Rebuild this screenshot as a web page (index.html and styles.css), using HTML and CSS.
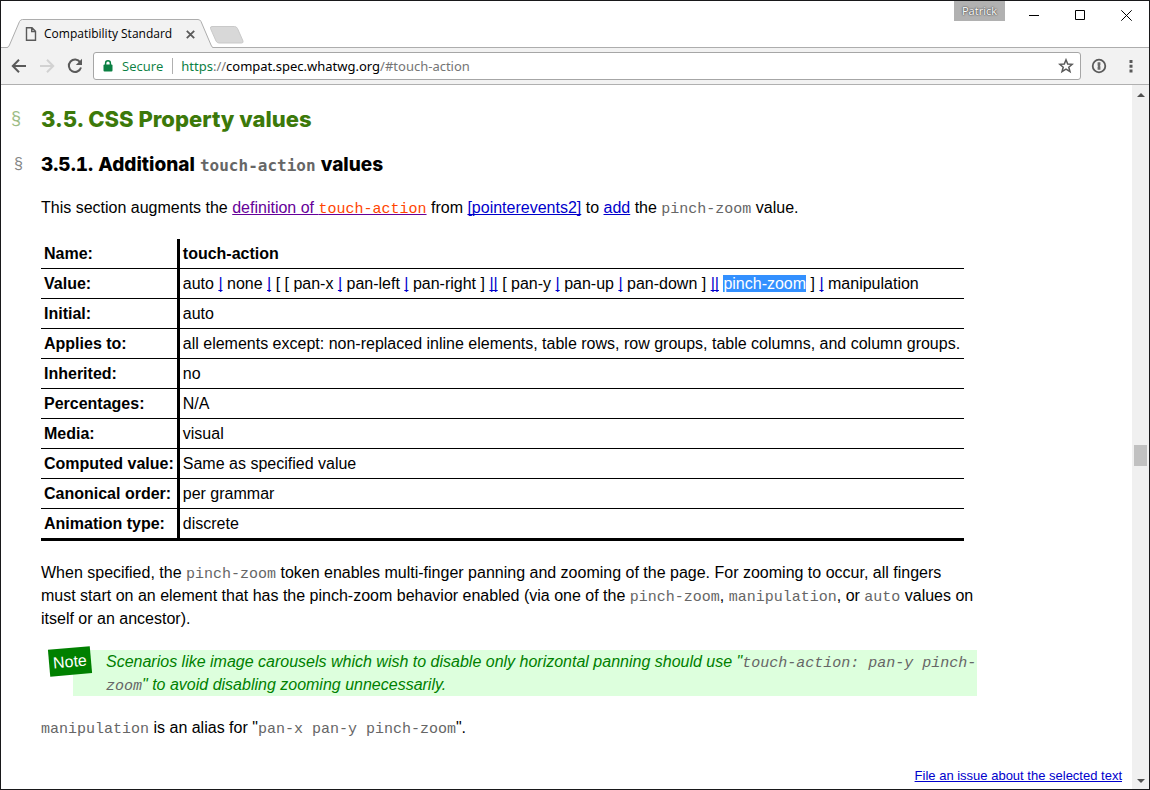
FILE: index.html
```html
<!DOCTYPE html>
<html lang="en">
<head>
<meta charset="utf-8">
<title>Compatibility Standard</title>
<link rel="stylesheet" href="styles.css">
</head>
<body>
<div class="window">
  <header class="tabstrip">
    <div class="tab">
      <svg class="tab-shape" width="208" height="29" viewBox="0 0 208 29" aria-hidden="true">
        <path class="tab-fill" d="M0 29V28.500H1Q2.500 28.500 3.500 26L13.500 2.500Q14.500 .5 16.500 .5H192Q194 .5 195 2.500L205 26Q206 28.500 207 28.500H208V29Z"/>
        <path class="tab-line" d="M0 28.500H1Q2.500 28.500 3.500 26L13.500 2.500Q14.500 .5 16.500 .5H192Q194 .5 195 2.500L205 26Q206 28.500 207 28.500H208"/>
      </svg>
      <svg class="tab-icon" width="12" height="14" viewBox="0 0 12 14" aria-hidden="true"><path d="M1.500 .7H7L10.500 4.200V13.300H1.500ZM6.700 .7V4.500H10.500"/></svg>
      <span class="tab-title">Compatibility Standard</span>
      <button class="plain tab-close" aria-label="Close tab"><svg width="9" height="9" viewBox="0 0 9 9"><path d="M.8 .8L8.200 8.200M8.200 .8L.8 8.200"/></svg></button>
    </div>
    <button class="plain new-tab" aria-label="New tab"><svg width="36" height="18" viewBox="0 0 36 18"><path d="M3 .5H25.500Q27.500 .5 28.500 2.500L34 15Q34.500 17 32.500 17H10Q8 17 7 15L1.500 2.500Q1 .5 3 .5Z"/></svg></button>
    <div class="controls">
      <button class="profile">Patrick</button>
      <button class="plain control" aria-label="Minimize"><svg width="11" height="11" viewBox="0 0 11 11"><path d="M0 5.500H10"/></svg></button>
      <button class="plain control" aria-label="Maximize"><svg width="11" height="11" viewBox="0 0 11 11"><path d="M.5 .5H9.500V9.500H.5Z"/></svg></button>
      <button class="plain control" aria-label="Close"><svg width="11" height="11" viewBox="0 0 11 11"><path d="M.3 .3L10.700 10.700M10.700 .3L.3 10.700"/></svg></button>
    </div>
  </header>

  <nav class="toolbar">
    <button class="plain tool" aria-label="Back"><svg width="16" height="16" viewBox="0 0 16 16"><path d="M15 8H2M8 1.800L1.800 8L8 14.200"/></svg></button>
    <button class="plain tool disabled" aria-label="Forward" disabled><svg width="16" height="16" viewBox="0 0 16 16"><path d="M1 8H14M8 1.800L14.200 8L8 14.200"/></svg></button>
    <button class="plain tool" aria-label="Reload"><svg width="16" height="16" viewBox="0 0 16 16"><path d="M13.200 4.200A6.200 6.200 0 1 0 14 9.500"/><path class="solid" d="M15 .8V7H8.800Z"/></svg></button>
    <div class="omnibox">
      <svg class="lock" width="10" height="12" viewBox="0 0 10 12" aria-hidden="true"><path class="lock-body" d="M1.500 4.500H8.500Q9.500 4.500 9.500 5.500V10.500Q9.500 11.500 8.500 11.500H1.500Q.5 11.500 .5 10.500V5.500Q.5 4.500 1.500 4.500Z"/><path class="shackle" d="M2.600 5V3.200A2.400 2.400 0 0 1 7.400 3.200V5"/></svg>
      <span class="secure">Secure</span>
      <label class="url"><span class="scheme">https</span><span class="muted">://</span><input class="host" type="text" value="compat.spec.whatwg.org" aria-label="Address"><span class="muted">/#touch-action</span></label>
      <button class="plain star" aria-label="Bookmark this page"><svg width="16" height="16" viewBox="0 0 16 16"><path d="M8 1.800L9.700 6L14.300 6.300L10.800 9.200L12 13.700L8 11.200L4 13.700L5.200 9.200L1.700 6.300L6.300 6Z"/></svg></button>
    </div>
    <button class="plain extension" aria-label="Password manager"><svg width="16" height="16" viewBox="0 0 16 16"><circle cx="8" cy="8" r="6.300"/><path class="solid" d="M6.600 4.200H9.400V7.200L8.900 7.800L9.400 8.400V11.800H6.600V8.800L7.100 8.200L6.600 7.600Z"/></svg></button>
    <button class="plain menu" aria-label="Menu"><svg width="4" height="14" viewBox="0 0 4 14"><path class="solid" d="M.5 1H3.500V4H.5ZM.5 5.800H3.500V8.800H.5ZM.5 10.500H3.500V13.500H.5Z"/></svg></button>
  </nav>

  <div class="viewport">
    <main class="page">
      <h3 class="section-title"><a class="anchor" href="#css-property-values" aria-label="Section link">§</a>3.5. CSS Property values</h3>
      <h4 class="subsection-title"><a class="anchor" href="#touch-action" aria-label="Section link">§</a>3.5.1. Additional <code>touch-action</code> values</h4>
      <p>This section augments the <a class="visited" href="#definition">definition of <code>touch-action</code></a> from <a href="#pointerevents2">[pointerevents2]</a> to <a href="#add">add</a> the <code>pinch-zoom</code> value.</p>
      <table class="propdef">
        <tr><th scope="row">Name:</th><td><strong>touch-action</strong></td></tr>
        <tr><th scope="row">Value:</th><td>auto <a href="#one">|</a> none <a href="#one">|</a> [ [ pan-x <a href="#one">|</a> pan-left <a href="#one">|</a> pan-right ] <a href="#any">||</a> [ pan-y <a href="#one">|</a> pan-up <a href="#one">|</a> pan-down ] <a href="#any">||</a> <span class="selected">pinch-zoom</span> ] <a href="#one">|</a> manipulation</td></tr>
        <tr><th scope="row">Initial:</th><td>auto</td></tr>
        <tr><th scope="row">Applies to:</th><td>all elements except: non-replaced inline elements, table rows, row groups, table columns, and column groups.</td></tr>
        <tr><th scope="row">Inherited:</th><td>no</td></tr>
        <tr><th scope="row">Percentages:</th><td>N/A</td></tr>
        <tr><th scope="row">Media:</th><td>visual</td></tr>
        <tr><th scope="row">Computed value:</th><td>Same as specified value</td></tr>
        <tr><th scope="row">Canonical order:</th><td>per grammar</td></tr>
        <tr><th scope="row">Animation type:</th><td>discrete</td></tr>
      </table>
      <p>When specified, the <code>pinch-zoom</code> token enables multi-finger panning and zooming of the page. For zooming to occur, all fingers must start on an element that has the pinch-zoom behavior enabled (via one of the <code>pinch-zoom</code>, <code>manipulation</code>, or <code>auto</code> values on itself or an ancestor).</p>
      <p class="note"><span class="note-label">Note</span>Scenarios like image carousels which wish to disable only horizontal panning should use "<code>touch-action: pan-y pinch-zoom</code>" to avoid disabling zooming unnecessarily.</p>
      <p><code>manipulation</code> is an alias for "<code>pan-x pan-y pinch-zoom</code>".</p>
    </main>
    <a class="file-issue" href="#file-issue">File an issue about the selected text</a>
    <div class="scrollbar" aria-hidden="true">
      <svg width="8" height="4" viewBox="0 0 8 4"><path d="M0 4L4 0L8 4Z"/></svg>
      <div class="track"><div class="thumb"></div></div>
      <svg width="8" height="4" viewBox="0 0 8 4"><path d="M0 0H8L4 4Z"/></svg>
    </div>
  </div>
</div>
</body>
</html>
```
FILE: styles.css
```css
* { box-sizing: border-box; }

body {
  margin: 0;
  font: 16px/23px "Liberation Sans", Arial, sans-serif;
  color: #000;
}

.window {
  display: flex;
  flex-direction: column;
  height: 100vh;
  overflow: hidden;
  border: 1px solid #18181a;
  background: #fff;
}

.plain {
  display: flex;
  align-items: center;
  justify-content: center;
  margin: 0;
  padding: 0;
  border: 0;
  background: none;
}

svg { display: block; }

/* Tab strip */
.tabstrip {
  display: flex;
  align-items: flex-end;
  height: 47px;
  flex: none;
  border-bottom: 1px solid #adadad;
  font-family: "Open Sans", "Noto Sans", sans-serif;
}

.tab {
  position: relative;
  display: flex;
  align-items: center;
  width: 208px;
  height: 28px;
  margin-left: 5px;
  padding: 2px 18px 0 19px;
}

.tab-shape { position: absolute; left: 0; top: 0; }
.tab-fill { fill: #f2f2f2; }
.tab-line { fill: none; stroke: #adadad; }

.tab-icon {
  position: relative;
  fill: none;
  stroke: #5a5a5a;
  stroke-width: 1.4;
}

.tab-title {
  position: relative;
  flex: 1;
  margin-left: 7px;
  font-size: 12px;
  line-height: 16px;
  white-space: nowrap;
}

.tab-close { position: relative; width: 12px; height: 16px; }
.tab-close svg { fill: none; stroke: #5a5a5a; stroke-width: 1.8; }

.new-tab { width: 36px; height: 18px; margin-bottom: 3px; margin-left: -5px; }
.new-tab svg { fill: #d8d8d8; stroke: #c9c9c9; }

.controls {
  display: flex;
  align-self: flex-start;
  margin-left: auto;
}

.profile {
  width: 51px;
  height: 20px;
  margin: 0 6px 0 0;
  padding: 0;
  border: 0;
  background: #b1b1b1;
  color: #fff;
  font: 11px/20px "Open Sans", "Noto Sans", sans-serif;
  text-shadow: 0 0 2px #333, 0 0 1px #555;
}

.control { width: 46px; height: 29px; }
.control svg { fill: none; stroke: #000; }

/* Toolbar */
.toolbar {
  display: flex;
  align-items: center;
  height: 37px;
  flex: none;
  padding: 0 10px 0 4px;
  border-bottom: 1px solid #b0b0b0;
  background: #f2f2f2;
  font: 13px/20px "Open Sans", "Noto Sans", sans-serif;
}

.tool { width: 28px; height: 28px; }
.tool svg { fill: none; stroke: #5a5a5a; stroke-width: 2; }
.tool.disabled svg { stroke: #d2d2d2; }
.tool .solid { fill: #5a5a5a; stroke: none; }

.omnibox {
  display: flex;
  align-items: center;
  flex: 1;
  height: 28px;
  margin-left: 4px;
  padding: 0 6px 0 9px;
  border: 1px solid #a6a6a6;
  border-radius: 3px;
  background: #fff;
}

.lock-body { fill: #0b8043; }
.shackle { fill: none; stroke: #0b8043; stroke-width: 1.5; }
.secure {
  margin-left: 9px;
  padding-right: 9px;
  border-right: 1px solid #b0b0b0;
  color: #0b8043;
  line-height: 16px;
}

.url {
  display: flex;
  flex: 1;
  margin-left: 8px;
  font-family: "Noto Sans", "Open Sans", sans-serif;
}

.scheme { color: #0b8043; }
.muted { color: #757575; }

.host {
  field-sizing: content;
  padding: 0;
  border: 0;
  outline: 0;
  background: none;
  color: #000;
  font: inherit;
}

.star svg { fill: none; stroke: #5a5a5a; stroke-width: 1.5; }
.extension { width: 20px; height: 28px; margin-left: 8px; }
.extension svg { fill: none; stroke: #5a5a5a; stroke-width: 1.8; }
.extension .solid { fill: #6a6a6a; stroke: none; }
.menu { width: 16px; height: 28px; margin-left: 14px; }
.menu .solid { fill: #5a5a5a; }

/* Document */
.viewport {
  position: relative;
  display: flex;
  flex: 1;
  min-height: 0;
}

.page {
  flex: 1;
  overflow: hidden;
  padding: 22px 40px 0;
}

.page > * { max-width: 936px; }

p { margin: 0 0 20px; }

h3, h4 {
  position: relative;
  margin: 0;
  font-family: Inter, "Liberation Sans", sans-serif;
  font-weight: 800;
}

.section-title {
  margin-bottom: 22px;
  color: #3c790a;
  font-size: 22px;
  line-height: 24px;
}

.subsection-title {
  margin-bottom: 19px;
  font-size: 19px;
  font-variant-numeric: tabular-nums;
  line-height: 24px;
}

.anchor {
  position: absolute;
  left: -30px;
  color: #9cbc85;
  font: 18px/22px "Liberation Sans", Arial, sans-serif;
  text-decoration: none;
}

.subsection-title .anchor {
  left: -27px;
  color: #858585;
  font-size: 16px;
}

a {
  color: #0000cc;
  text-decoration-skip-ink: none;
}

.visited { color: #660099; }

code {
  color: #666;
  font-family: "Liberation Mono", "Courier New", monospace;
  font-size: 15px;
  line-height: 1;
}

h4 code {
  font-family: "DejaVu Sans Mono", monospace;
  font-size: 16px;
}

.visited code { color: #ff4500; }

.propdef {
  margin-bottom: 20px;
  border-collapse: collapse;
  border-bottom: 3px solid #000;
}

.propdef th,
.propdef td {
  padding: 3px;
  border-bottom: 1px solid #000;
  text-align: left;
  vertical-align: baseline;
  white-space: nowrap;
}

.propdef td { padding-right: 4px; }
.propdef th { border-right: 3px solid #000; }
.propdef tr:last-child > * { border-bottom: 3px solid #000; }

.selected { background: #3390ff; color: #fff; }

.note {
  position: relative;
  max-width: 904px;
  margin-left: 32px;
  padding-left: 33px;
  background: #ddffdd;
  color: #008000;
  font-style: italic;
}

.note-label {
  position: absolute;
  left: -24px;
  top: -2px;
  padding: 2px 4px;
  background: #008000;
  color: #fff;
  font-style: normal;
  transform: rotate(-5deg);
}

.file-issue {
  position: absolute;
  right: 27px;
  bottom: 2px;
  font-size: 13px;
}

/* Scrollbar */
.scrollbar {
  display: flex;
  flex-direction: column;
  align-items: center;
  width: 17px;
  padding: 8px 0 6px;
  background: #f0f0f0;
}

.scrollbar path { fill: #505050; }

.track {
  display: grid;
  grid-template-rows: 52% auto;
  align-items: end;
  flex: 1;
}

.thumb {
  grid-row: 1;
  width: 13px;
  height: 21px;
  margin-bottom: -14px;
  background: #c1c1c1;
}
```
